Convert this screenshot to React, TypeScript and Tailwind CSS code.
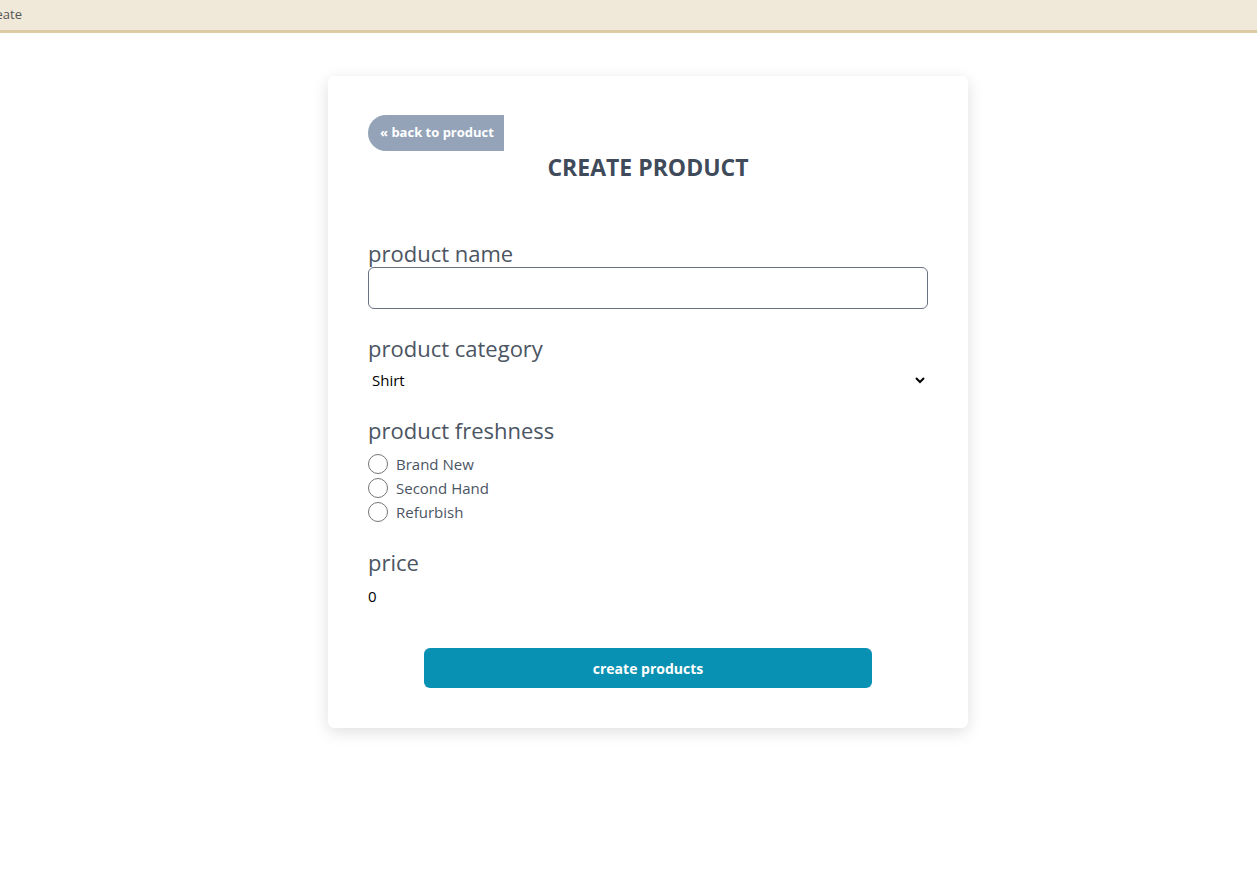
import { useState } from "react";

const freshnessOptions = ["Brand New", "Second Hand", "Refurbish"];

export default function App() {
  const [name, setName] = useState("");
  const [category, setCategory] = useState("Shirt");
  const [freshness, setFreshness] = useState("");
  const [price, setPrice] = useState("0");

  return (
    <div className="min-h-[877px] bg-white" style={{ fontFamily: '"Open Sans", "Noto Sans", sans-serif' }}>
      <div className="h-[33px] bg-[#f0e8d8] border-b-[3px] border-[#dccaa2] text-[13px] text-[#555] leading-[28px] -ml-[18px]">
        Create
      </div>

      <div className="flex justify-center pt-[43px] pl-[39px]">
        <div className="w-[640px] bg-white rounded-md shadow-[0_4px_16px_rgba(0,0,0,0.13)] px-10 pt-[39px] pb-10">
          <button className="h-9 pl-3 pr-[10px] bg-[#94a3b8] text-white text-[13px] font-bold rounded-l-full rounded-r-[4px]">
            « back to product
          </button>
          <h1 className="text-center text-[23px] font-bold text-[#3f4b5b] leading-8">CREATE PRODUCT</h1>

          <form className="mt-[56px]" onSubmit={(e) => e.preventDefault()}>
            <label className="block text-[22px] text-[#4b5563] leading-7">product name</label>
            <input
              value={name}
              onChange={(e) => setName(e.target.value)}
              className="block w-full h-[42px] border border-[#6b7280] rounded-md px-3 outline-none"
            />

            <label className="block mt-[25px] text-[22px] text-[#4b5563] leading-7">product category</label>
            <select
              value={category}
              onChange={(e) => setCategory(e.target.value)}
              className="block w-full mt-[6px] h-6 text-[15px] text-black bg-white"
            >
              <option>Shirt</option>
              <option>Pants</option>
              <option>Shoes</option>
            </select>

            <label className="block mt-[24px] text-[22px] text-[#4b5563] leading-7">product freshness</label>
            <div className="mt-[8px] flex flex-col">
              {freshnessOptions.map((opt) => (
                <label key={opt} className="flex items-center h-6 text-[15px] text-[#4b5563]">
                  <input
                    type="radio"
                    name="freshness"
                    checked={freshness === opt}
                    onChange={() => setFreshness(opt)}
                    className="w-5 h-5 m-0 mr-2"
                  />
                  {opt}
                </label>
              ))}
            </div>

            <label className="block mt-[24px] text-[22px] text-[#4b5563] leading-7">price</label>
            <input
              value={price}
              onChange={(e) => setPrice(e.target.value)}
              className="block w-full mt-[8px] h-6 text-[15px] text-black outline-none"
            />

            <div className="flex justify-center mt-[40px]">
              <button type="submit" className="w-[448px] h-10 bg-[#0891b2] text-white text-[14px] font-bold rounded-md">
                create products
              </button>
            </div>
          </form>
        </div>
      </div>
    </div>
  );
}
